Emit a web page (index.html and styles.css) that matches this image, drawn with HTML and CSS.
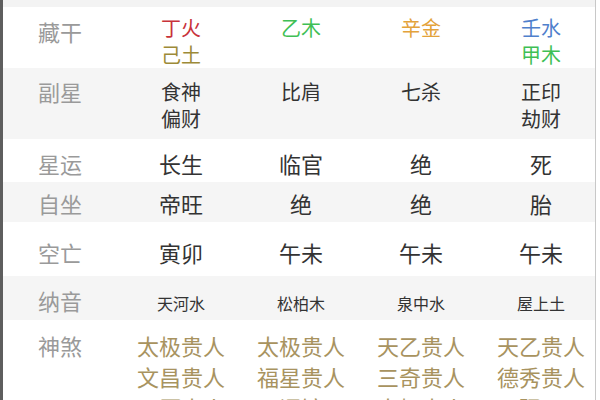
FILE: index.html
```html
<!DOCTYPE html>
<html lang="zh">
<head>
<meta charset="utf-8">
<link rel="stylesheet" href="styles.css">
</head>
<body>
<div class="frame">
  <div class="table">
    <div class="strip"></div>

    <div class="row r-cang">
      <div class="label">藏干</div>
      <div class="cell"><span class="red">丁火</span><span class="olive">己土</span></div>
      <div class="cell"><span class="green">乙木</span></div>
      <div class="cell"><span class="orange">辛金</span></div>
      <div class="cell"><span class="blue">壬水</span><span class="green">甲木</span></div>
    </div>

    <div class="row gray r-fu">
      <div class="label">副星</div>
      <div class="cell"><span>食神</span><span>偏财</span></div>
      <div class="cell"><span>比肩</span></div>
      <div class="cell"><span>七杀</span></div>
      <div class="cell"><span>正印</span><span>劫财</span></div>
    </div>

    <div class="row big r-xing">
      <div class="label">星运</div>
      <div class="cell"><span>长生</span></div>
      <div class="cell"><span>临官</span></div>
      <div class="cell"><span>绝</span></div>
      <div class="cell"><span>死</span></div>
    </div>

    <div class="row gray big r-zi">
      <div class="label">自坐</div>
      <div class="cell"><span>帝旺</span></div>
      <div class="cell"><span>绝</span></div>
      <div class="cell"><span>绝</span></div>
      <div class="cell"><span>胎</span></div>
    </div>

    <div class="row big r-kong">
      <div class="label">空亡</div>
      <div class="cell"><span>寅卯</span></div>
      <div class="cell"><span>午未</span></div>
      <div class="cell"><span>午未</span></div>
      <div class="cell"><span>午未</span></div>
    </div>

    <div class="row gray r-na">
      <div class="label">纳音</div>
      <div class="cell"><span>天河水</span></div>
      <div class="cell"><span>松柏木</span></div>
      <div class="cell"><span>泉中水</span></div>
      <div class="cell"><span>屋上土</span></div>
    </div>

    <div class="row r-shen">
      <div class="label">神煞</div>
      <div class="cell"><span>太极贵人</span><span>文昌贵人</span><span>天厨贵人</span></div>
      <div class="cell"><span>太极贵人</span><span>福星贵人</span><span>词馆</span></div>
      <div class="cell"><span>天乙贵人</span><span>三奇贵人</span><span>太极贵人</span></div>
      <div class="cell"><span>天乙贵人</span><span>德秀贵人</span><span>驿马</span></div>
    </div>
  </div>
</div>
</body>
</html>
```

FILE: styles.css
```css
html, body {
  margin: 0;
  padding: 0;
  background: #ffffff;
}

body {
  font-family: "Noto Sans CJK SC", "Noto Sans", sans-serif;
  color: #333333;
  width: 600px;
  height: 400px;
  overflow: hidden;
}

.frame {
  width: 592px;
  height: 400px;
  border-left: 3px solid #5e5e5e;
  border-right: 1px solid #c8c8c8;
  overflow: hidden;
}

.table {
  width: 600px;
}

.strip {
  height: 7px;
  background: #f3f3f3;
}

.row {
  display: grid;
  grid-template-columns: 118px repeat(4, 120px);
  background: #ffffff;
}

.row.gray {
  background: #f5f5f5;
}

.label {
  padding-left: 35px;
  font-size: 22px;
  line-height: 27px;
  color: #9a9a9a;
}

.cell {
  display: flex;
  flex-direction: column;
  align-items: center;
  font-size: 20px;
  line-height: 27px;
}

.cell span {
  white-space: nowrap;
}

/* 藏干 */
.r-cang {
  height: 61px;
  padding-top: 7px;
  box-sizing: border-box;
}
.r-cang .label {
  padding-top: 4px;
}

/* 副星 */
.r-fu {
  height: 71px;
  padding-top: 10px;
  box-sizing: border-box;
}

/* single-line big rows */
.big .label,
.big .cell {
  font-size: 22px;
  line-height: 30px;
}

.r-xing {
  height: 43px;
  padding-top: 9px;
  box-sizing: border-box;
}

.r-zi {
  height: 40px;
  padding-top: 6px;
  box-sizing: border-box;
}

.r-kong {
  height: 54px;
  padding-top: 15px;
  box-sizing: border-box;
}

/* 纳音 */
.r-na {
  height: 44px;
  padding-top: 9px;
  box-sizing: border-box;
}
.r-na .label {
  line-height: 30px;
}
.r-na .cell {
  font-size: 16px;
  line-height: 30px;
  padding-top: 3px;
}

/* 神煞 */
.r-shen {
  padding-top: 10px;
}
.r-shen .label {
  line-height: 31px;
}
.r-shen .cell {
  font-size: 22px;
  line-height: 31px;
  color: #a8935f;
}

.red { color: #c8323a; }
.olive { color: #9d8a38; }
.green { color: #3fbf55; }
.orange { color: #e3a23a; }
.blue { color: #4f80cc; }
```
